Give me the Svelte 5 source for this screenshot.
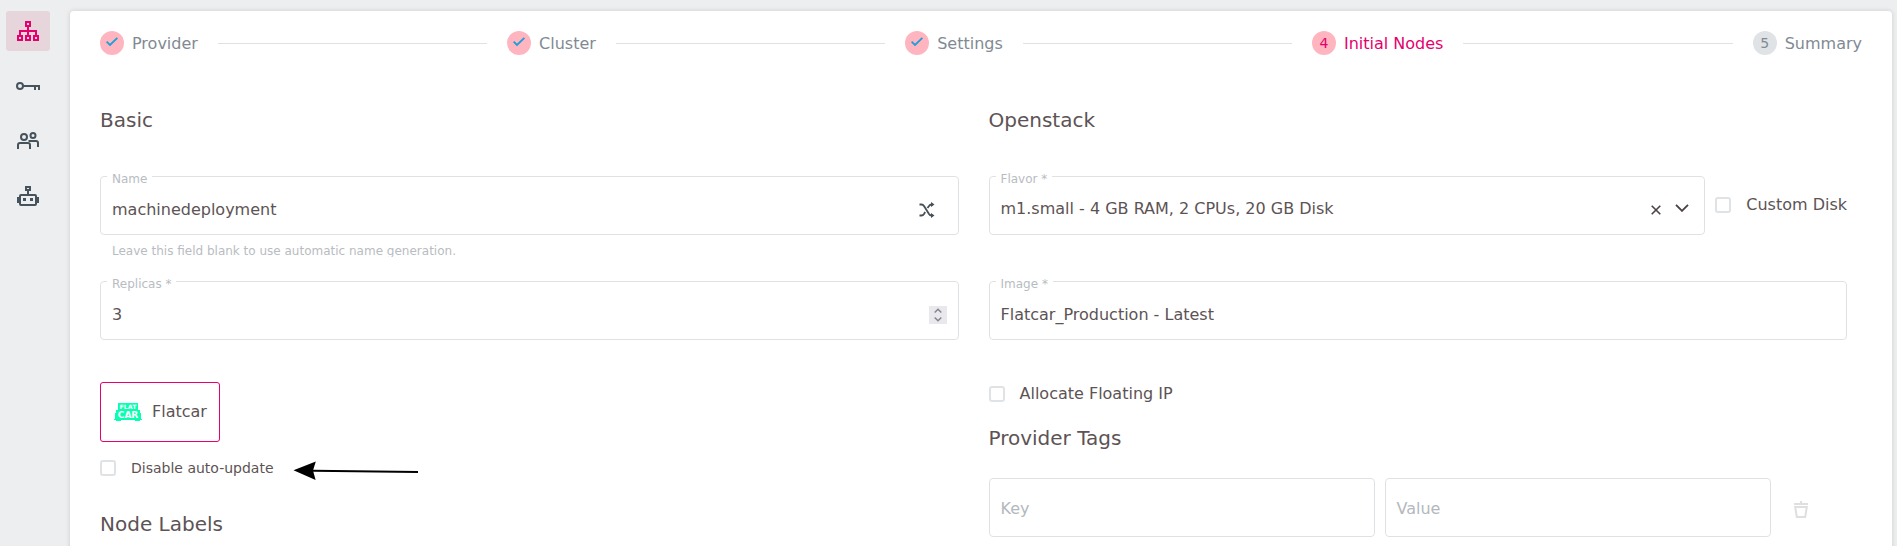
<script>
  const steps = [
    { label: 'Provider', state: 'done' },
    { label: 'Cluster', state: 'done' },
    { label: 'Settings', state: 'done' },
    { label: 'Initial Nodes', state: 'active' },
    { label: 'Summary', state: 'todo' }
  ];
</script>

<div class="page">
  <nav class="sidebar">
    <a class="item active" href="#clusters" aria-label="Clusters">
      <svg width="24" height="24" viewBox="0 0 24 24" fill="none" stroke="currentColor" stroke-width="2">
        <path d="M10 3h4v4h-4zM2 17h4v4H2zM10 17h4v4h-4zM18 17h4v4h-4zM12 7v10M4 17v-5h16v5" />
      </svg>
    </a>
    <a class="item" href="#keys" aria-label="SSH Keys">
      <svg width="24" height="24" viewBox="0 0 24 24" fill="none" stroke="currentColor" stroke-width="2">
        <circle cx="4" cy="12" r="3" /><path d="M7 12h16v4M19 12v4" />
      </svg>
    </a>
    <a class="item" href="#members" aria-label="Members">
      <svg width="24" height="24" viewBox="0 0 24 24" fill="none" stroke="currentColor" stroke-width="2">
        <circle cx="8" cy="8" r="3" /><circle cx="17" cy="6.500" r="2.500" />
        <path d="M2 20v-4q0-2 2-2h8q2 0 2 2v4M12.500 12h7.500q2 0 2 2v4" />
      </svg>
    </a>
    <a class="item" href="#accounts" aria-label="Service Accounts">
      <svg width="24" height="24" viewBox="0 0 24 24" fill="none" stroke="currentColor" stroke-width="2">
        <path d="M10 3h4v3h-4zM12 6v5M5 11h14q1 0 1 1v8q0 1-1 1H5q-1 0-1-1v-8q0-1 1-1z" />
        <path d="M2 13v6M22 13v6" />
        <path d="M7 15.500h3M14 15.500h3" stroke-width="3" />
      </svg>
    </a>
  </nav>

  <main class="card">
    <ol class="stepper">
      {#each steps as step, i}
        {#if i > 0}<li class="line" aria-hidden="true"></li>{/if}
        <li class="step {step.state}">
          <span class="dot">
            {#if step.state === 'done'}
              <svg width="12" height="10" viewBox="0 0 12 10" fill="none" stroke="#1b9fd8" stroke-width="1.800"><path d="M.6 4.600L4 8 11.400.8" /></svg>
            {:else}{i + 1}{/if}
          </span>
          <span class="name">{step.label}</span>
        </li>
      {/each}
    </ol>

    <div class="columns">
      <section>
        <h2>Basic</h2>
        <div class="field">
          <span class="label">Name</span>
          <span class="value">machinedeployment</span>
          <svg class="shuffle" width="16" height="16" viewBox="0 0 16 16" fill="none" stroke="#444f57" stroke-width="1.800">
            <path d="M.5 2.500h2Q4 2.500 5 4l5 8q1 1.500 2.500 1.500h1M.5 13.500h2Q4 13.500 5 12l1.200-2M8.500 6L10 4q1-1.500 2.500-1.500h1" />
            <path d="M12 0l3.500 2.500L12 5zM12 11l3.500 2.500L12 16z" fill="#444f57" stroke="none" />
          </svg>
        </div>
        <p class="hint">Leave this field blank to use automatic name generation.</p>
        <div class="field">
          <span class="label">Replicas *</span>
          <span class="value">3</span>
          <span class="spinner">
            <svg width="8" height="14" viewBox="0 0 8 14" fill="none" stroke="#85858f" stroke-width="1.500"><path d="M.7 4.500L4 1.300l3.300 3.200M.7 9.500L4 12.700l3.300-3.200" /></svg>
          </span>
        </div>
        <div class="os">
          <svg width="28" height="18" viewBox="0 0 28 18">
            <path fill="#09ffb0" d="M4 0h20v7h2v3h1v6h1v1h-2v1h-5v-1H7v1H2v-1H0v-1h1v-6h1V7h2z" />
            <g fill="#fff" font-family="DejaVu Sans" font-weight="bold">
              <text x="5.500" y="6" font-size="6" textLength="17" lengthAdjust="spacingAndGlyphs">FLAT</text>
              <text x="3.800" y="14.800" font-size="9" textLength="20.500" lengthAdjust="spacingAndGlyphs">CAR</text>
            </g>
          </svg>
          <span>Flatcar</span>
        </div>
        <div class="check update">
          <span class="box"></span><span>Disable auto-update</span>
          <svg class="arrow" width="126" height="20" viewBox="0 0 126 20">
            <path d="M20 9.700L125 11" stroke="#000" stroke-width="2" />
            <path d="M.5 9.300L22.800.5 20 9.600l2.600 9.400z" />
          </svg>
        </div>
        <h2 class="labels">Node Labels</h2>
      </section>

      <section>
        <h2>Openstack</h2>
        <div class="row">
          <div class="field flavor">
            <span class="label">Flavor *</span>
            <span class="value raised">m1.small - 4 GB RAM, 2 CPUs, 20 GB Disk</span>
            <svg class="clear" width="10" height="10" viewBox="0 0 10 10" fill="none" stroke="#4b4244" stroke-width="1.600"><path d="M.7.7l8.600 8.600M9.300.7L.7 9.300" /></svg>
            <svg class="chevron" width="14" height="8" viewBox="0 0 14 8" fill="none" stroke="#4b4244" stroke-width="1.900"><path d="M1 .8l6 6 6-6" /></svg>
          </div>
          <div class="check disk"><span class="box"></span><span>Custom Disk</span></div>
        </div>
        <div class="field image">
          <span class="label">Image *</span>
          <span class="value">Flatcar_Production - Latest</span>
        </div>
        <div class="check floating"><span class="box"></span><span>Allocate Floating IP</span></div>
        <h2 class="tags">Provider Tags</h2>
        <div class="row pair">
          <div class="field"><span class="value empty">Key</span></div>
          <div class="field"><span class="value empty">Value</span></div>
          <svg class="trash" width="14" height="17" viewBox="0 0 14 17" fill="none" stroke="#dfdfdf" stroke-width="2">
            <path d="M0 3h14M7 0v3M1.200 6h11.600L11.200 16H2.800z" />
          </svg>
        </div>
      </section>
    </div>
  </main>
</div>

<style>
  :global(body) { background: #edeef0; overflow: hidden; }
  .page {
    display: flex;
    height: 546px;
    overflow: hidden;
    box-sizing: border-box;
    padding: 11px 5px 0 6px;
    font: 16px/20px 'DejaVu Sans', sans-serif;
    color: #5d5355;
  }
  .sidebar { display: flex; flex-direction: column; gap: 15px; width: 44px; margin-right: 20px; }
  .item { display: flex; align-items: center; justify-content: center; height: 40px; border-radius: 3px; color: #46525c; }
  .item.active { background: #e6d5da; color: #e5006d; }
  .card {
    flex: 1;
    height: 600px;
    box-sizing: border-box;
    padding: 20px 30px 0;
    background: #fff;
    border-radius: 4px 4px 0 0;
    box-shadow: 0 0 5px rgba(0, 0, 0, .14);
  }
  .stepper { display: flex; align-items: center; gap: 20px; height: 24px; margin: 0; padding: 0; list-style: none; color: #818a93; }
  .line { flex: 1; height: 1px; margin-top: 1px; background: #dfe2e4; }
  .step { display: flex; align-items: center; gap: 8px; white-space: nowrap; }
  .name { padding-top: 2px; }
  .dot { display: flex; align-items: center; justify-content: center; width: 24px; height: 24px; border-radius: 50%; background: #ffb5bf; font-size: 14px; }
  .dot svg { margin-top: -2px; }
  .active { color: #e5006d; }
  .todo .dot { background: #dfe3e6; }
  .columns { display: grid; grid-template-columns: 1fr 1fr; gap: 30px; padding: 53px 15px 0 0; }
  h2 { margin: 0 0 44px; font-size: 20px; font-weight: 400; line-height: 24px; }
  .field {
    position: relative;
    display: flex;
    align-items: center;
    box-sizing: border-box;
    height: 59px;
    padding: 8px 11px 0;
    border: 1px solid #dfe2e5;
    border-radius: 4px;
  }
  .label { position: absolute; left: 6px; top: -5px; padding: 0 5px; background: #fff; color: #b8bcc2; font-size: 12px; line-height: 14px; }
  .value { flex: 1; }
  .value.raised { margin-top: -2px; }
  .value.empty { color: #b3b8be; margin-top: -6px; }
  .hint { height: 14px; margin: 8px 12px 24px; overflow: hidden; color: #b8bcc2; font-size: 12px; line-height: 16px; }
  .shuffle { margin-right: 12px; }
  .spinner { display: flex; align-items: center; justify-content: center; width: 18px; height: 18px; background: #e8e8ed; }
  .os {
    display: flex;
    align-items: center;
    gap: 10px;
    box-sizing: border-box;
    width: 120px;
    height: 60px;
    margin-top: 42px;
    padding-left: 13px;
    border: 1px solid #e5006d;
    border-radius: 3px;
  }
  .check { display: flex; align-items: center; gap: 15px; white-space: nowrap; }
  .box { box-sizing: border-box; width: 16px; height: 16px; border: 2px solid #dfe3e6; border-radius: 3px; }
  .update { height: 20px; margin-top: 16px; font-size: 14px; }
  .arrow { margin: 5px 0 0 4px; }
  .labels { margin-top: 34px; }
  .row { display: flex; gap: 10px; }
  .flavor { flex: 1; }
  .disk { height: 58px; }
  .clear { margin-right: 14px; }
  .chevron { margin: -3px 4px 0 0; }
  .image { margin-top: 46px; }
  .floating { margin-top: 44px; }
  .tags { margin: 22px 0 28px; }
  .pair { align-items: center; }
  .pair .field { width: 386px; }
  .trash { margin: 3px 0 0 13px; }
</style>
